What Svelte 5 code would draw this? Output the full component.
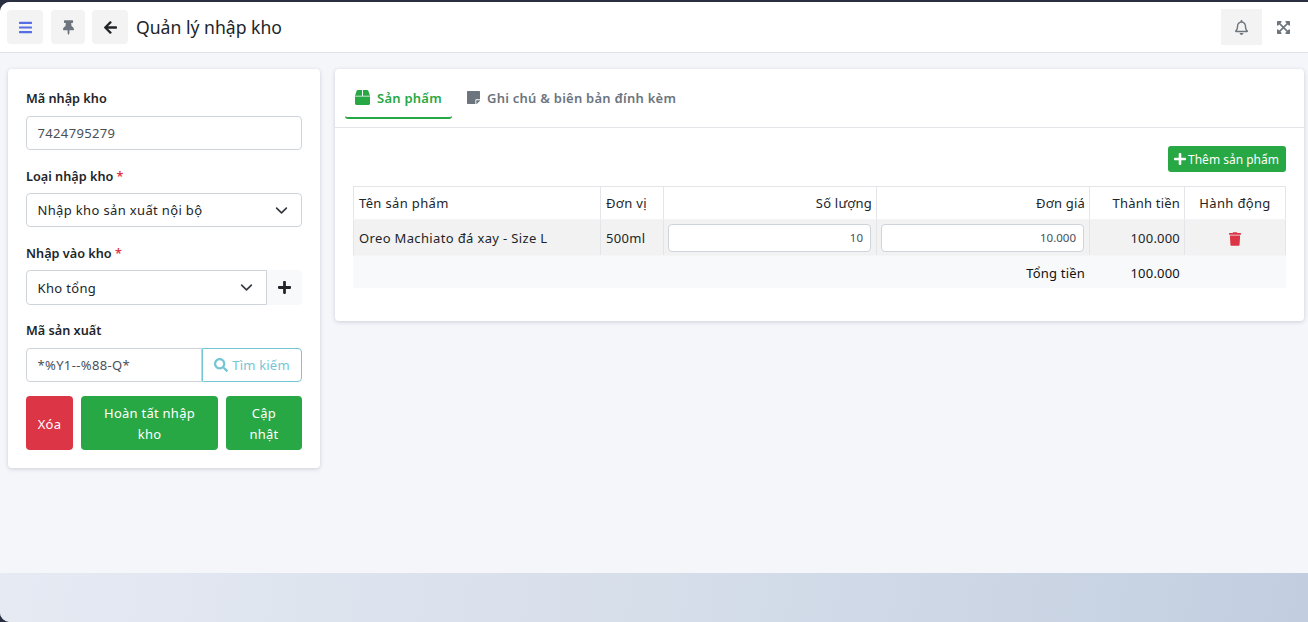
<script>
  const rows = [
    { name: 'Oreo Machiato đá xay - Size L', unit: '500ml', qty: '10', price: '10.000', total: '100.000' }
  ];
</script>

<div class="frame">
  <div class="page">
    <header class="topbar">
      <button class="tool menu" aria-label="Menu">
        <svg viewBox="0 0 448 512" width="13" height="15"><path fill="#556ee6" d="M16 132h416c8.837 0 16-7.163 16-16V76c0-8.837-7.163-16-16-16H16C7.163 60 0 67.163 0 76v40c0 8.837 7.163 16 16 16zm0 160h416c8.837 0 16-7.163 16-16v-40c0-8.837-7.163-16-16-16H16c-8.837 0-16 7.163-16 16v40c0 8.837 7.163 16 16 16zm0 160h416c8.837 0 16-7.163 16-16v-40c0-8.837-7.163-16-16-16H16c-8.837 0-16 7.163-16 16v40c0 8.837 7.163 16 16 16z"/></svg>
      </button>
      <button class="tool pin" aria-label="Ghim">
        <svg viewBox="0 0 384 512" width="11" height="15"><path fill="#6c757d" d="M298.028 214.267L285.793 96H328c13.255 0 24-10.745 24-24V24c0-13.255-10.745-24-24-24H56C42.745 0 32 10.745 32 24v48c0 13.255 10.745 24 24 24h42.207L85.972 214.267C37.465 236.82 0 277.261 0 328c0 13.255 10.745 24 24 24h136v104.007c0 1.242.289 2.467.845 3.578l24 48c2.941 5.882 11.364 5.893 14.311 0l24-48a8.008 8.008 0 0 0 .845-3.578V352h136c13.255 0 24-10.745 24-24-.001-51.183-37.983-91.42-85.973-113.733z"/></svg>
      </button>
      <button class="tool back" aria-label="Quay lại">
        <svg viewBox="0 0 448 512" width="13" height="15"><path fill="#212529" d="M257.5 445.1l-22.2 22.2c-9.4 9.4-24.6 9.4-33.9 0L7 273c-9.4-9.4-9.4-24.6 0-33.9L201.4 44.7c9.4-9.4 24.6-9.4 33.9 0l22.2 22.2c9.5 9.5 9.3 25-.4 34.3L136.6 216H424c13.3 0 24 10.7 24 24v32c0 13.3-10.7 24-24 24H136.6l120.5 114.8c9.8 9.3 10 24.8.4 34.3z"/></svg>
      </button>
      <h1>Quản lý nhập kho</h1>
      <div class="spacer"></div>
      <button class="bell" aria-label="Thông báo">
        <svg viewBox="0 0 448 512" width="13" height="15"><path fill="#6c757d" d="M439.39 362.29c-19.32-20.76-55.47-51.99-55.47-154.29 0-77.7-54.48-139.9-127.94-155.16V32c0-17.67-14.32-32-31.98-32s-31.98 14.33-31.98 32v20.84C118.56 68.1 64.08 130.3 64.08 208c0 102.3-36.15 133.53-55.47 154.29-6 6.45-8.66 14.16-8.61 21.71.11 16.4 12.98 32 32.1 32h383.8c19.12 0 32-15.6 32.1-32 .05-7.55-2.61-15.27-8.61-21.71zM67.53 368c21.22-27.97 44.42-74.33 44.53-159.42 0-.2-.06-.38-.06-.58 0-61.86 50.14-112 112-112s112 50.14 112 112c0 .2-.06.38-.06.58.11 85.1 23.31 131.46 44.53 159.42H67.53zM224 512c35.32 0 63.97-28.65 63.97-64H160.03c0 35.35 28.65 64 63.97 64z"/></svg>
      </button>
      <button class="full" aria-label="Toàn màn hình">
        <svg viewBox="0 0 448 512" width="13" height="15"><path fill="#6c757d" d="M448 344v112a23.94 23.94 0 0 1-24 24H312c-21.39 0-32.09-25.9-17-41l36.2-36.2L224 295.6 116.77 402.9 153 439c15.09 15.1 4.39 41-17 41H24a23.94 23.94 0 0 1-24-24V344c0-21.4 25.89-32.1 41-17l36.19 36.2L184.46 256 77.18 148.7 41 185c-15.1 15.1-41 4.4-41-17V56a23.94 23.94 0 0 1 24-24h112c21.39 0 32.09 25.9 17 41l-36.2 36.2L224 216.4l107.23-107.3L295 73c-15.09-15.1-4.39-41 17-41h112a23.94 23.94 0 0 1 24 24v112c0 21.4-25.89 32.1-41 17l-36.19-36.2L263.54 256l107.28 107.3L407 327.1c15.1-15.2 41-4.5 41 16.9z"/></svg>
      </button>
    </header>

    <main class="content">
      <section class="card form">
        <div class="field">
          <label for="code">Mã nhập kho</label>
          <input id="code" class="control" value="7424795279" />
        </div>
        <div class="field">
          <label class="required" for="type">Loại nhập kho <span class="req">*</span></label>
          <div id="type" class="control select">
            <span>Nhập kho sản xuất nội bộ</span>
            <svg viewBox="0 0 16 16" width="13" height="13"><path fill="none" stroke="#343a40" stroke-width="2" stroke-linecap="round" stroke-linejoin="round" d="M2 5l6 6 6-6"/></svg>
          </div>
        </div>
        <div class="field">
          <label class="required" for="wh">Nhập vào kho <span class="req">*</span></label>
          <div class="group tall">
            <div id="wh" class="control select joined">
              <span>Kho tổng</span>
              <svg viewBox="0 0 16 16" width="13" height="13"><path fill="none" stroke="#343a40" stroke-width="2" stroke-linecap="round" stroke-linejoin="round" d="M2 5l6 6 6-6"/></svg>
            </div>
            <button class="add" aria-label="Thêm kho">
              <svg viewBox="0 0 448 512" width="13" height="15"><path fill="#212529" d="M416 208H272V64c0-17.67-14.33-32-32-32h-32c-17.67 0-32 14.33-32 32v144H32c-17.67 0-32 14.33-32 32v32c0 17.67 14.33 32 32 32h144v144c0 17.67 14.33 32 32 32h32c17.67 0 32-14.33 32-32V304h144c17.67 0 32-14.33 32-32v-32c0-17.67-14.33-32-32-32z"/></svg>
            </button>
          </div>
        </div>
        <div class="field">
          <label for="mfg">Mã sản xuất</label>
          <div class="group">
            <input id="mfg" class="control joined" value="*%Y1--%88-Q*" />
            <button class="search">
              <svg viewBox="0 0 512 512" width="14" height="14"><path fill="#74c6d6" d="M505 442.7L405.3 343c-4.5-4.5-10.6-7-17-7H372c27.6-35.3 44-79.7 44-128C416 93.1 322.9 0 208 0S0 93.1 0 208s93.1 208 208 208c48.3 0 92.7-16.4 128-44v16.3c0 6.4 2.5 12.5 7 17l99.7 99.7c9.4 9.4 24.6 9.4 33.9 0l28.3-28.3c9.4-9.4 9.4-24.6.1-34zM208 336c-70.7 0-128-57.2-128-128 0-70.7 57.2-128 128-128 70.7 0 128 57.2 128 128 0 70.7-57.2 128-128 128z"/></svg>
              Tìm kiếm
            </button>
          </div>
        </div>
        <div class="actions">
          <button class="btn danger">Xóa</button>
          <button class="btn success finish">Hoàn tất nhập kho</button>
          <button class="btn success update">Cập nhật</button>
        </div>
      </section>

      <section class="card detail">
        <nav class="tabs">
          <div class="tab active">
            <svg viewBox="0 0 512 512" width="15" height="15"><path fill="#28a745" d="M509.5 184.6L458.9 32.8C452.4 13.2 434.1 0 413.4 0H272v192h238.7c-.4-2.5-.4-5-1.2-7.4zM240 0H98.6c-20.7 0-39 13.2-45.5 32.8L2.5 184.6c-.8 2.4-.8 4.9-1.2 7.4H240V0zM0 224v240c0 26.5 21.5 48 48 48h416c26.5 0 48-21.5 48-48V224H0z"/></svg>
            Sản phẩm
          </div>
          <div class="tab">
            <svg viewBox="0 0 448 512" width="13" height="15"><path fill="#6c757d" d="M312 320h136V56c0-13.3-10.7-24-24-24H24C10.7 32 0 42.7 0 56v400c0 13.3 10.7 24 24 24h264V344c0-13.2 10.8-24 24-24zm129 55l-98 98c-4.5 4.5-10.6 7-17 7h-6V352h128v6.1c0 6.3-2.5 12.4-7 16.9z"/></svg>
            Ghi chú &amp; biên bản đính kèm
          </div>
        </nav>
        <div class="panel">
          <div class="toolbar">
            <button class="btn success small">
              <svg viewBox="0 0 448 512" width="12" height="14"><path fill="#fff" d="M416 208H272V64c0-17.67-14.33-32-32-32h-32c-17.67 0-32 14.33-32 32v144H32c-17.67 0-32 14.33-32 32v32c0 17.67 14.33 32 32 32h144v144c0 17.67 14.33 32 32 32h32c17.67 0 32-14.33 32-32V304h144c17.67 0 32-14.33 32-32v-32c0-17.67-14.33-32-32-32z"/></svg>
              Thêm sản phẩm
            </button>
          </div>
          <table>
            <colgroup>
              <col style="width:247px" /><col style="width:63px" /><col style="width:213px" /><col style="width:213px" /><col style="width:95px" /><col style="width:101px" />
            </colgroup>
            <thead>
              <tr>
                <th>Tên sản phẩm</th>
                <th>Đơn vị</th>
                <th class="right">Số lượng</th>
                <th class="right">Đơn giá</th>
                <th class="right">Thành tiền</th>
                <th class="center">Hành động</th>
              </tr>
            </thead>
            <tbody>
              {#each rows as row}
                <tr>
                  <td>{row.name}</td>
                  <td>{row.unit}</td>
                  <td class="cell-input"><input class="num" value={row.qty} /></td>
                  <td class="cell-input"><input class="num" value={row.price} /></td>
                  <td class="right">{row.total}</td>
                  <td class="center">
                    <svg class="trash" viewBox="0 0 448 512" width="12" height="14"><path fill="#dc3545" d="M432 32H312l-9.4-18.7A24 24 0 0 0 281.1 0H166.8a23.72 23.72 0 0 0-21.4 13.3L136 32H16A16 16 0 0 0 0 48v32a16 16 0 0 0 16 16h416a16 16 0 0 0 16-16V48a16 16 0 0 0-16-16zM53.2 467a48 48 0 0 0 47.9 45h245.8a48 48 0 0 0 47.9-45L416 128H32z"/></svg>
                  </td>
                </tr>
              {/each}
            </tbody>
            <tfoot>
              <tr>
                <td colspan="4" class="right">Tổng tiền</td>
                <td class="right">100.000</td>
                <td></td>
              </tr>
            </tfoot>
          </table>
        </div>
      </section>
    </main>

    <footer class="foot"></footer>
  </div>
</div>

<style>
  :global(body) {
    margin: 0;
    font-family: "Noto Sans", Inter, sans-serif;
    color: #212529;
  }

  .frame {
    height: 622px;
    background: #2a3042;
    padding-top: 2px;
    box-sizing: border-box;
    overflow: hidden;
  }

  .page {
    height: 620px;
    display: flex;
    flex-direction: column;
    background: #f5f6fa;
    border-radius: 10px 0 0 10px;
    overflow: hidden;
  }

  button {
    font-family: inherit;
    border: none;
    padding: 0;
    cursor: pointer;
  }

  .topbar {
    height: 50px;
    flex: none;
    display: flex;
    align-items: center;
    background: #fff;
    border-bottom: 1px solid #dfe2e8;
    padding-left: 7px;
  }

  .tool {
    height: 34px;
    display: flex;
    align-items: center;
    justify-content: center;
    background: #f3f3f3;
    border-radius: 4px;
  }

  .menu { width: 36px; }
  .pin { width: 34px; margin-left: 8px; }
  .back { width: 36px; margin-left: 7px; }

  h1 {
    margin: 0 0 0 8px;
    font-size: 17.6px;
    font-weight: 400;
    color: #212529;
  }

  .spacer { flex: 1; }

  .bell {
    width: 41px;
    height: 36px;
    display: flex;
    align-items: center;
    justify-content: center;
    background: #f3f3f3;
  }

  .full {
    width: 46px;
    height: 36px;
    padding-right: 4px;
    display: flex;
    align-items: center;
    justify-content: center;
    background: transparent;
  }

  .content {
    flex: 1;
    display: flex;
    align-items: flex-start;
    gap: 15px;
    padding: 16px 5px 0 8px;
  }

  .card {
    background: #fff;
    border-radius: 4px;
    box-shadow: 0 1px 4px rgba(40, 50, 80, 0.2);
  }

  .form {
    width: 312px;
    flex: none;
    box-sizing: border-box;
    padding: 18px;
  }

  .field { margin-bottom: 14px; }

  label {
    display: block;
    font-size: 12.7px;
    line-height: 21px;
    font-weight: 600;
    padding-top: 1px;
    margin-bottom: 7px;
  }

  label.required {
    padding-top: 2px;
    margin-bottom: 6px;
  }

  .req { color: #dc3545; }

  .control {
    display: block;
    width: 100%;
    height: 34px;
    box-sizing: border-box;
    border: 1px solid #ced4da;
    border-radius: 4px;
    padding: 0 11px 0 10.5px;
    font-family: inherit;
    font-size: 13px;
    letter-spacing: 0.35px;
    color: #495057;
    background: #fff;
    outline: none;
  }

  .select {
    display: flex;
    align-items: center;
    justify-content: space-between;
    color: #212529;
    padding-right: 13px;
  }

  .group { display: flex; }
  .tall .control { height: 35px; }

  .group .joined {
    flex: 1;
    min-width: 0;
    border-radius: 4px 0 0 4px;
  }

  .add {
    width: 35px;
    flex: none;
    display: flex;
    align-items: center;
    justify-content: center;
    background: #f8f9fa;
    border-radius: 0 4px 4px 0;
  }

  .search {
    width: 100px;
    flex: none;
    display: flex;
    align-items: center;
    justify-content: center;
    gap: 4px;
    background: #fff;
    border: 1px solid #74c6d6;
    border-radius: 0 4px 4px 0;
    font-size: 13px;
    letter-spacing: 0.2px;
    color: #74c6d6;
  }

  .actions {
    display: flex;
    gap: 8px;
  }

  .btn {
    color: #fff;
    font-size: 13px;
    line-height: 21px;
    letter-spacing: 0.25px;
    border-radius: 4px;
    padding: 7px 0 5px;
    text-align: center;
  }

  .danger { background: #dc3545; width: 47px; flex: none; }
  .success { background: #28a745; }
  .finish { flex: 1; padding: 7px 20px 5px; }
  .update { width: 76px; flex: none; padding: 7px 20px 5px; }

  .tabs {
    height: 59px;
    box-sizing: border-box;
    display: flex;
    padding: 0 10px;
    border-bottom: 1px solid #e3e5e9;
  }

  .tab {
    display: flex;
    align-items: center;
    gap: 7px;
    height: 50px;
    padding: 9px 10px 0;
    font-size: 13px;
    font-weight: 600;
    letter-spacing: 0.25px;
    color: #6c757d;
    border-bottom: 2px solid transparent;
    border-radius: 0 0 3px 3px;
    box-sizing: border-box;
  }

  .tab.active {
    color: #28a745;
    border-bottom-color: #28a745;
  }

  .tab + .tab { margin-left: 5px; }

  .panel {
    padding: 18px 18px 33px;
  }

  .toolbar {
    display: flex;
    justify-content: flex-end;
    margin-bottom: 14px;
  }

  .small {
    display: flex;
    align-items: center;
    gap: 2px;
    height: 26px;
    padding: 0 7px 0 6px;
    font-size: 12px;
    letter-spacing: 0;
    border-radius: 3px;
  }

  table {
    width: 932px;
    table-layout: fixed;
    border-collapse: collapse;
    font-size: 13px;
    letter-spacing: 0.35px;
  }

  th, td {
    padding: 0 5px;
    font-weight: 400;
    text-align: left;
    border: 1px solid #e3e5e9;
  }

  th { height: 32px; border-bottom-color: #f4f4f6; }

  tbody tr { background: #f2f2f2; }
  tbody td { height: 35px; border-bottom-color: #f4f5f6; }

  tfoot tr { background: #f8f9fa; }
  tfoot td { height: 29px; padding-top: 2px; border-color: #f8f9fa; color: #111; }

  .right { text-align: right; padding-right: 4px; letter-spacing: 0.2px; }
  .center { text-align: center; }

  .cell-input { padding: 0 5px 0 4px; }

  .num {
    display: block;
    width: 100%;
    height: 28px;
    box-sizing: border-box;
    border: 1px solid #ced4da;
    border-radius: 4px;
    padding: 0 7px;
    background: #fff;
    text-align: right;
    font-family: inherit;
    font-size: 11.5px;
    letter-spacing: 0;
    color: #495057;
    outline: none;
  }

  .trash { display: inline-block; vertical-align: middle; }

  .foot {
    margin-top: auto;
    height: 49px;
    flex: none;
    background: linear-gradient(100deg, #e6eaf3 0%, #d6deea 50%, #c2cee0 100%);
  }
</style>
